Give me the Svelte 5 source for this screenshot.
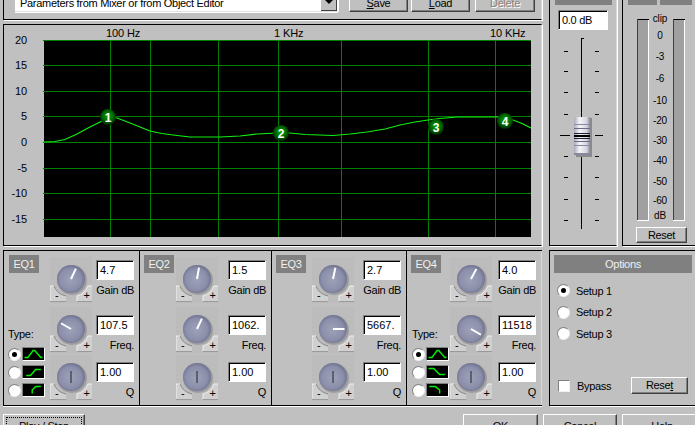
<script>
  const curve = "44,142 55,141.5 65,139.5 77,134 88,128 100,122 108,117 117,118 130,123 140,127 150,131 162,133.5 173,135 190,137 220,137 240,136 257,134 277,133 290,133 305,134.5 333,135.5 350,134 367,132 385,129 400,125 415,122 428,120 440,118.5 457,117 500,117 513,120 522,123.5 531,128";
  const hLines = [40, 65, 91, 116, 142, 168, 193, 219];
  const vLines = [110, 150, 218, 278, 341, 428, 495];
  const yLabels = [["20", 40], ["15", 65], ["10", 91], ["5", 116], ["0", 142], ["-5", 168], ["-10", 193], ["-15", 219]];
  const nodes = [[1, 108, 117], [2, 281, 133], [3, 436, 127], [4, 505, 121]];
  const faderTicks = [51, 71, 92, 114, 156, 177, 199, 220];
  const scale = [["clip", 18], ["0", 35], ["-3", 56], ["-6", 78], ["-10", 100], ["-20", 120], ["-30", 140], ["-40", 160], ["-50", 181], ["-60", 200], ["dB", 215]];
  const shapes = {
    peak: "1,11 5,11 11,3 13,3 20,11 22,11",
    lowUp: "3,11 8,11 14,4 20,4",
    hiUp: "10,11 10,7 14,3 20,3",
    hiDown: "1,3 7,3 14,10 20,10",
    cut: "2,3 9,3 14,7 14,11"
  };
  const bands = [
    { name: "EQ1", cls: "b1", gain: "4.7", ga: 25, freq: "107.5", fa: -60, q: "1.00", type: ["peak", "lowUp", "hiUp"] },
    { name: "EQ2", cls: "b2", gain: "1.5", ga: 10, freq: "1062.", fa: 25, q: "1.00" },
    { name: "EQ3", cls: "b3", gain: "2.7", ga: 12, freq: "5667.", fa: 90, q: "1.00" },
    { name: "EQ4", cls: "b4", gain: "4.0", ga: 28, freq: "11518", fa: 120, q: "1.00", type: ["peak", "hiDown", "cut"] }
  ];
</script>

{#snippet knob(angle, muted)}
  <svg class="knob" width="42" height="48" viewBox="0 0 42 48">
    <rect x="0" y="2" width="42" height="46" fill="#bcbcbc" />
    <path d="M0 31 H4 Q7 39 16 41 V46 H0 Z" fill="#d0d0d0" />
    <path d="M0 46 V31 H4" fill="none" stroke="#f0f0f0" />
    <path d="M4 31 Q7 39 16 41" fill="none" stroke="#8a8a8a" />
    <path d="M42 31 H38 Q35 39 27 41 V46 H42 Z" fill="#d0d0d0" />
    <path d="M27 46 V41 Q35 39 38 31 H42" fill="none" stroke="#f0f0f0" />
    <path d="M0 46.5 H16 M27 46.5 H42" stroke="#9a9a9a" />
    <text class="sign" x="5" y="44">-</text>
    <text class="sign" x="33.5" y="44">+</text>
    <circle cx="22" cy="25" r="15" fill="#9c9c9c" />
    <circle cx="21" cy="24" r="14" fill="url(#knobFill)" />
    <line x1="21" y1={muted ? 18 : 24} x2="21" y2={muted ? 30 : 12.5}
      stroke={muted ? "#5c5f6e" : "#fff"} stroke-width="2"
      transform={`rotate(${angle} 21 24)`} />
  </svg>
{/snippet}

{#snippet mini(points)}
  <svg class="mini" width="23" height="14" viewBox="0 0 23 14">
    <polyline points={points} fill="none" stroke="#00f000" stroke-width="1.7" />
  </svg>
{/snippet}

<svg class="defs" width="0" height="0">
  <defs>
    <radialGradient id="knobFill" cx="48%" cy="52%" r="55%">
      <stop offset="0" stop-color="#9da1b8" />
      <stop offset="0.7" stop-color="#8b8faa" />
      <stop offset="1" stop-color="#6a6e8c" />
    </radialGradient>
    <radialGradient id="nodeFill" cx="50%" cy="45%" r="55%">
      <stop offset="0" stop-color="#00a800" />
      <stop offset="0.55" stop-color="#007000" />
      <stop offset="1" stop-color="#002400" />
    </radialGradient>
    <linearGradient id="thumbFill" x1="0" x2="1" y1="0" y2="0">
      <stop offset="0" stop-color="#aaaab8" />
      <stop offset="0.35" stop-color="#f4f4f8" />
      <stop offset="0.8" stop-color="#d4d4de" />
      <stop offset="1" stop-color="#8888a0" />
    </linearGradient>
  </defs>
</svg>

<div class="app">
  <div class="grid">
    <div class="left">
      <section class="panel top">
        <div class="combo">
          <span class="combo-text">Parameters from Mixer or from Object Editor</span>
          <span class="arrow"><i></i></span>
        </div>
        <button class="btn save"><u>S</u>ave</button>
        <button class="btn load"><u>L</u>oad</button>
        <button class="btn del" disabled>Delete</button>
      </section>

      <section class="panel graph">
        <svg class="plot" width="537" height="220" viewBox="4 25 537 220">
          <rect x="44" y="40" width="487" height="197" fill="#000" />
          <g class="crisp">
            {#each hLines as y}
              <line x1="43" x2="531" y1={y + 0.5} y2={y + 0.5} stroke="#008000" />
            {/each}
            {#each vLines as x}
              <line x1={x + 0.5} x2={x + 0.5} y1="40" y2="237" stroke="#008000" />
            {/each}
          </g>
          <polyline points={curve} fill="none" stroke="#10f010" stroke-width="1.2" />
          {#each yLabels as [t, y]}
            <text class="lbl" x="27" y={y + 4} text-anchor="end">{t}</text>
          {/each}
          <text class="lbl" x="106" y="37">100 Hz</text>
          <text class="lbl" x="274" y="37">1 KHz</text>
          <text class="lbl" x="490" y="37">10 KHz</text>
          {#each nodes as [n, x, y]}
            <circle cx={x} cy={y} r="8" fill="url(#nodeFill)" />
            <text class="node" x={x} y={y + 4.5} text-anchor="middle">{n}</text>
          {/each}
        </svg>
      </section>

      <section class="eqs">
        {#each bands as b}
          <div class="band {b.cls}">
            <div class="side">
              <div class="tag">{b.name}</div>
              {#if b.type}
                <div class="types">
                  <div class="type-title">Type:</div>
                  {#each b.type as s, i}
                    <div class="type-row">
                      <span class="radio small">{#if i === 0}<i></i>{/if}</span>
                      {@render mini(shapes[s])}
                    </div>
                  {/each}
                </div>
              {/if}
            </div>
            {@render knob(b.ga, false)}
            <div class="param r0"><div class="value">{b.gain}</div><div class="cap">Gain dB</div></div>
            {@render knob(b.fa, false)}
            <div class="param r1"><div class="value">{b.freq}</div><div class="cap">Freq.</div></div>
            {@render knob(0, true)}
            <div class="param r2"><div class="value">{b.q}</div><div class="cap">Q</div></div>
          </div>
        {/each}
      </section>
    </div>

    <div class="right">
      <div class="strips">
        <section class="panel fader">
          <div class="head fhead"></div>
          <div class="value gainbox">0.0 dB</div>
          <svg class="fadersvg" width="66" height="200" viewBox="550 35 66 200">
            <g class="crisp">
              <rect x="581" y="38" width="1" height="191" fill="#000" />
              <rect x="581" y="38" width="3" height="1" fill="#000" />
              {#each faderTicks as y}
                <rect x="564" y={y} width="4" height="1" fill="#000" />
                <rect x="595" y={y} width="4" height="1" fill="#000" />
              {/each}
              <rect x="560" y="135" width="10" height="1" fill="#000" />
              <rect x="595" y="135" width="8" height="1" fill="#000" />
            </g>
            <rect x="576" y="118" width="16" height="39" fill="#8a8a8a" />
            <rect x="574" y="117" width="16" height="38" fill="url(#thumbFill)" />
            <g class="crisp">
              <rect x="574" y="124" width="16" height="1" fill="#8a8aa8" />
              <rect x="574" y="128" width="16" height="1" fill="#6a6a88" />
              <rect x="574" y="133" width="16" height="1" fill="#202030" />
              <rect x="574" y="135" width="16" height="2" fill="#000" />
              <rect x="574" y="138" width="16" height="1" fill="#202030" />
              <rect x="574" y="141" width="16" height="1" fill="#6a6a88" />
              <rect x="574" y="145" width="16" height="1" fill="#8a8aa8" />
              <rect x="574" y="153" width="16" height="2" fill="#8888a0" />
            </g>
          </svg>
        </section>

        <section class="panel meter">
          <div class="mheads"><div class="head m1"></div><div class="head m2"></div></div>
          <svg class="metersvg" width="72" height="215" viewBox="623 8 72 215">
            <g class="crisp">
              <rect x="637" y="19" width="12" height="202" fill="#a0a0a0" />
              <rect x="637" y="19" width="12" height="1" fill="#000" />
              <rect x="637" y="19" width="1" height="202" fill="#404040" />
              <rect x="648" y="20" width="1" height="201" fill="#fff" />
              <rect x="637" y="220" width="12" height="1" fill="#fff" />
              <rect x="673" y="19" width="12" height="202" fill="#a0a0a0" />
              <rect x="673" y="19" width="12" height="1" fill="#000" />
              <rect x="673" y="19" width="1" height="202" fill="#404040" />
              <rect x="684" y="20" width="1" height="201" fill="#fff" />
              <rect x="673" y="220" width="12" height="1" fill="#fff" />
            </g>
            {#each scale as [t, y]}
              <text class="lbl tiny" x="660" y={y + 3.5} text-anchor="middle">{t}</text>
            {/each}
          </svg>
          <button class="btn mreset">Reset</button>
        </section>
      </div>

      <section class="panel options">
        <div class="head ohead">Options</div>
        <div class="setups">
          <div class="setup"><span class="radio"><i></i></span>Setup 1</div>
          <div class="setup"><span class="radio"></span>Setup 2</div>
          <div class="setup"><span class="radio"></span>Setup 3</div>
        </div>
        <div class="optfoot">
          <div class="bypass"><span class="check"></span>Bypass</div>
          <button class="btn oreset">Rese<u>t</u></button>
        </div>
      </section>
    </div>

    <footer class="foot">
      <button class="btn play">Play / Stop</button>
      <button class="btn ok">OK</button>
      <button class="btn cancel">Cancel</button>
      <button class="btn help">Help</button>
    </footer>
  </div>
</div>

<style>
  :global(body) {
    margin: 0;
    background: #c0c0c0;
  }
  .defs {
    position: absolute;
  }
  .app {
    width: 695px;
    height: 425px;
    overflow: hidden;
    font-family: "Liberation Sans", Arial, sans-serif;
    font-size: 11px;
    letter-spacing: -0.3px;
    color: #000;
    background: #c0c0c0;
  }
  .grid {
    display: grid;
    grid-template-columns: 539px 153px;
    column-gap: 7px;
    margin-top: -20px;
    padding-left: 3px;
    width: 702px;
  }
  .left,
  .right {
    display: flex;
    flex-direction: column;
    gap: 4px;
  }
  .panel {
    box-sizing: border-box;
    border: 1px solid #000;
    border-right-color: #d8d8d8;
    box-shadow: 1px 1px 0 #fff;
  }
  .crisp {
    shape-rendering: crispEdges;
  }

  .top {
    height: 40px;
    display: flex;
    align-items: flex-end;
    padding: 0 0 7px 11px;
  }
  .combo {
    box-sizing: border-box;
    width: 323px;
    height: 18px;
    margin-right: 11px;
    background: #fff;
    display: flex;
    align-items: center;
    justify-content: space-between;
    padding-left: 5px;
    border-bottom: 1px solid #e0e0e0;
    box-shadow: 0 1px 0 #fff, 1px 0 0 #fff;
  }
  .arrow {
    width: 16px;
    height: 100%;
    margin-right: 1px;
    background: #c0c0c0;
    border-right: 1px solid #404040;
    border-bottom: 1px solid #404040;
    display: flex;
    align-items: center;
    justify-content: center;
    box-sizing: border-box;
  }
  .arrow i {
    width: 0;
    height: 0;
    border-left: 4px solid transparent;
    border-right: 4px solid transparent;
    border-top: 4px solid #000;
  }
  .btn {
    box-sizing: border-box;
    display: block;
    margin: 0;
    padding: 0;
    background: #c0c0c0;
    border: 1px solid;
    border-color: #fff #404040 #404040 #fff;
    box-shadow: inset -1px -1px 0 #808080;
    font: inherit;
    letter-spacing: inherit;
    color: #000;
    text-align: center;
  }
  .save {
    width: 59px;
    height: 18px;
    margin-right: 3px;
  }
  .load {
    width: 59px;
    height: 18px;
    margin-right: 5px;
  }
  .del {
    width: 60px;
    height: 18px;
    color: #808080;
    text-shadow: 1px 1px 0 #fff;
  }

  .graph {
    height: 222px;
  }
  .plot {
    display: block;
  }
  .lbl {
    font-size: 11px;
    letter-spacing: -0.1px;
    fill: #000;
  }
  .tiny {
    font-size: 10px;
  }
  .node {
    font-size: 12px;
    font-weight: 700;
    fill: #fff;
  }

  .eqs {
    box-sizing: border-box;
    height: 156px;
    display: grid;
    grid-template-columns: 136px 132px 135px 136px;
    border: 1px solid #000;
    border-left: 0;
    border-right: 0;
    box-shadow: 0 1px 0 #fff;
  }
  .band {
    box-sizing: border-box;
    border-left: 1px solid #000;
    padding-top: 4px;
    display: grid;
    grid-template-rows: 50px 48px 48px;
    grid-auto-flow: row;
    align-items: start;
    height: 154px;
  }
  .b1 { grid-template-columns: 46px 42px 38px; column-gap: 0; }
  .b2 { grid-template-columns: 36px 43px 38px; }
  .b3 { grid-template-columns: 40px 42px 38px; }
  .b4 {
    grid-template-columns: 43px 43px 38px;
    border-right: 1px solid #d8d8d8;
  }
  .b1 .param { margin-left: 4px; }
  .b2 .param { margin-left: 9px; }
  .b3 .param { margin-left: 9px; }
  .b4 .param { margin-left: 5px; }
  .side {
    grid-row: 1 / 4;
    grid-column: 1;
    height: 146px;
    display: flex;
    flex-direction: column;
    justify-content: space-between;
    padding-left: 4px;
  }
  .b1 .side { padding-left: 5px; }
  .tag {
    width: 30px;
    height: 18px;
    background: #808080;
    color: #f0f0f0;
    line-height: 18px;
    text-align: center;
  }
  .types {
    padding-bottom: 2px;
    margin-left: -1px;
  }
  .b4 .types {
    margin-left: 1px;
  }
  .type-title {
    margin: 0 0 4px 0;
    line-height: 14px;
  }
  .type-row {
    display: flex;
    align-items: center;
    gap: 1px;
    height: 18px;
  }
  .mini {
    display: block;
    background: #000;
    box-sizing: border-box;
    border: 1px solid;
    border-color: #808080 #fff #fff #808080;
  }
  .knob {
    display: block;
    grid-column: 2;
  }
  .param {
    grid-column: 3;
    width: 38px;
  }
  .r0 { padding-top: 5px; }
  .r1 { padding-top: 10px; }
  .r2 { padding-top: 9px; }
  .value {
    box-sizing: border-box;
    height: 20px;
    background: #fff;
    border: 1px solid;
    border-color: #808080 #fff #fff #808080;
    box-shadow: inset 1px 1px 0 #000;
    padding: 0 0 0 3px;
    line-height: 19px;
    letter-spacing: 0;
    overflow: hidden;
    white-space: nowrap;
  }
  .cap {
    margin-top: 3px;
    line-height: 14px;
    text-align: right;
    white-space: nowrap;
  }

  .radio {
    box-sizing: border-box;
    width: 13px;
    height: 13px;
    border-radius: 50%;
    background: #fff;
    border: 1px solid;
    border-color: #808080 #f0f0f0 #f0f0f0 #808080;
    display: inline-flex;
    align-items: center;
    justify-content: center;
    flex: none;
  }
  .radio i {
    width: 5px;
    height: 5px;
    border-radius: 50%;
    background: #000;
  }

  .right .strips {
    display: flex;
    gap: 5px;
    height: 266px;
  }
  .fader {
    width: 68px;
    flex: none;
  }
  .head {
    background: #808080;
    color: #f0f0f0;
  }
  .fhead {
    height: 24px;
    margin: 0 4px 0 5px;
  }
  .gainbox {
    width: 50px;
    margin: 5px 0 0 8px;
    letter-spacing: -0.3px;
    padding-left: 3px;
  }
  .fadersvg {
    display: block;
    margin-top: 5px;
  }
  .meter {
    width: 80px;
    flex: none;
  }
  .mheads {
    display: flex;
    gap: 3px;
    margin-left: 5px;
  }
  .m1,
  .m2 {
    height: 24px;
  }
  .m1 { width: 29px; }
  .m2 { width: 32px; }
  .metersvg {
    display: block;
    margin-top: 3px;
  }
  .mreset {
    width: 51px;
    height: 16px;
    margin: 4px 0 0 13px;
    line-height: 12px;
  }

  .options {
    height: 156px;
    width: 153px;
    display: flex;
    flex-direction: column;
    padding: 4px 0 11px 4px;
  }
  .ohead {
    width: 138px;
    height: 18px;
    line-height: 18px;
    text-align: center;
  }
  .setups {
    margin-top: 7px;
    padding-left: 3px;
  }
  .setup {
    display: flex;
    align-items: center;
    gap: 6px;
    height: 21.5px;
  }
  .optfoot {
    margin-top: auto;
    display: grid;
    grid-template-columns: 73px 57px;
    align-items: center;
    padding-left: 4px;
  }
  .bypass {
    display: flex;
    align-items: center;
    gap: 7px;
  }
  .check {
    box-sizing: border-box;
    width: 12px;
    height: 12px;
    background: #fff;
    border: 1px solid;
    border-color: #808080 #f0f0f0 #f0f0f0 #808080;
  }
  .oreset {
    height: 17px;
    line-height: 13px;
  }

  .foot {
    grid-column: 1 / -1;
    display: flex;
    margin-top: 8px;
  }
  .foot .btn {
    height: 23px;
    flex: none;
  }
  .play {
    width: 82px;
    margin-right: 378px;
    outline: 1px dotted #000;
    outline-offset: -4px;
  }
  .ok {
    width: 75px;
    margin-right: 5px;
  }
  .cancel {
    width: 74px;
    margin-right: 5px;
  }
  .help {
    width: 80px;
  }
  .sign {
    font-size: 11px;
    fill: #000;
  }
</style>
